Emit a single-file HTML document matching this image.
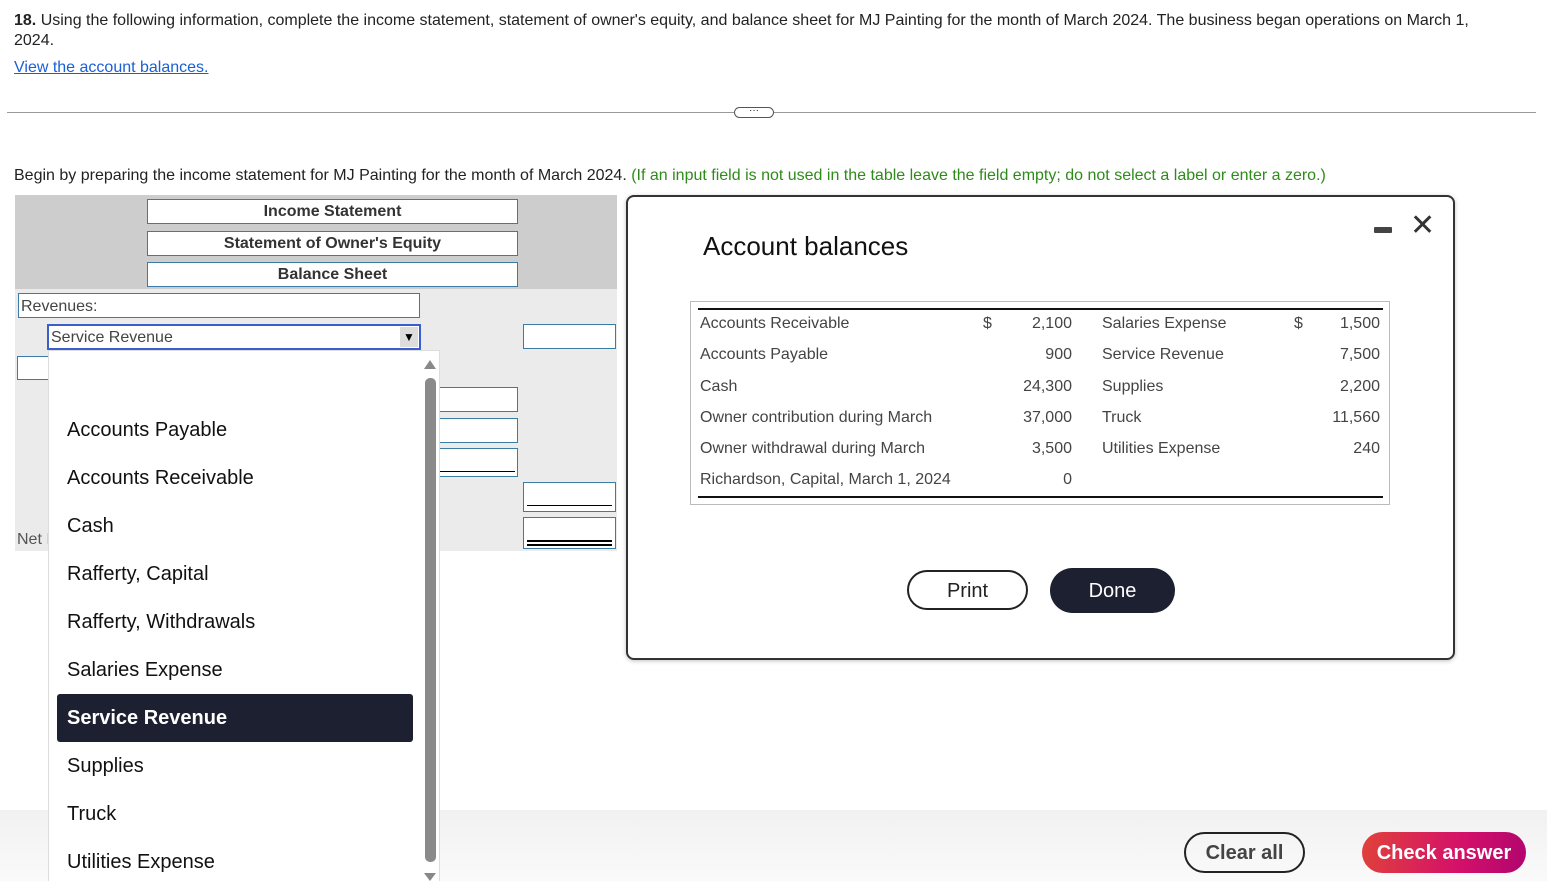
<!DOCTYPE html>
<html><head><style>
*{box-sizing:border-box}
body{margin:0;width:1547px;height:881px;overflow:hidden;background:#fff;font-family:"Liberation Sans",Arial,sans-serif;position:relative;color:#222}
.a{position:absolute}
.box{position:absolute;background:#fff;border:1px solid #3a7ca5}
.hb{position:absolute;left:147px;width:371px;height:25px;background:#fff;border:1px solid #3a7ca5;text-align:center;font-weight:bold;font-size:16px;line-height:24px;color:#333}
.it{position:absolute;left:67px;font-size:20px;color:#111}
.tr{position:absolute;font-size:16px;color:#444}
</style></head><body>
<div class="a" style="left:14px;top:11px;width:1480px;font-size:16px;line-height:20px;color:#222"><b>18.</b> Using the following information, complete the income statement, statement of owner's equity, and balance sheet for MJ Painting for the month of March 2024. The business began operations on March 1, 2024.</div>
<div class="a" style="left:14px;top:59px;font-size:16px;color:#1a5fd6;text-decoration:underline">View the account balances.</div>
<div class="a" style="left:7px;top:112px;width:1529px;height:1px;background:#999"></div>
<div class="a" style="left:734px;top:107px;width:40px;height:11px;border:1px solid #555;border-radius:6px;background:#fff;font-size:10px;line-height:6px;text-align:center">···</div>
<div class="a" style="left:14px;top:167px;font-size:16px;color:#222">Begin by preparing the income statement for MJ Painting for the month of March 2024. <span style="color:#2e8b1a">(If an input field is not used in the table leave the field empty; do not select a label or enter a zero.)</span></div>

<div class="a" style="left:15px;top:195px;width:602px;height:94px;background:#cdcdcd"></div>
<div class="a" style="left:15px;top:289px;width:602px;height:262px;background:#ebebeb"></div>
<div class="hb" style="top:199px">Income Statement</div>
<div class="hb" style="top:231px">Statement of Owner's Equity</div>
<div class="hb" style="top:262px">Balance Sheet</div>
<div class="box" style="left:18px;top:293px;width:402px;height:25px;font-size:16px;line-height:25px;padding-left:2px;color:#444">Revenues:</div>
<div class="box" style="left:47px;top:324px;width:374px;height:26px;border:2px solid #3a5fcd;font-size:16px;line-height:24px;padding-left:2px;color:#444">Service Revenue<div class="a" style="right:1px;top:1px;width:18px;height:20px;background:#ddd;font-size:12px;text-align:center;line-height:20px;color:#000">▼</div></div>
<div class="box" style="left:523px;top:324px;width:93px;height:25px"></div>
<div class="box" style="left:17px;top:356px;width:40px;height:24px"></div>
<div class="box" style="left:430px;top:387px;width:88px;height:25px"></div>
<div class="box" style="left:430px;top:418px;width:88px;height:25px"></div>
<div class="box" style="left:430px;top:448px;width:88px;height:29px"><div class="a" style="left:8px;right:2px;top:22px;height:1px;background:#000"></div></div>
<div class="box" style="left:523px;top:482px;width:93px;height:30px"><div class="a" style="left:3px;right:3px;top:22px;height:1px;background:#000"></div></div>
<div class="box" style="left:523px;top:517px;width:93px;height:32px"><div class="a" style="left:3px;right:3px;top:22px;height:2px;background:#000"></div><div class="a" style="left:3px;right:3px;top:26px;height:2px;background:#000"></div></div>
<div class="a" style="left:17px;top:531px;font-size:16px;color:#555">Net I</div>
<div class="a" style="left:0;top:810px;width:1547px;height:71px;background:linear-gradient(#f1f1f1,#fafafa)"></div>

<div class="a" style="left:48px;top:350px;width:392px;height:531px;background:#fff;border:1px solid #ddd;border-bottom:none"></div>
<div class="a" style="left:424px;top:360px;width:0;height:0;border-left:6px solid transparent;border-right:6px solid transparent;border-bottom:9px solid #888"></div>
<div class="a" style="left:425px;top:378px;width:11px;height:484px;background:#8a8a8a;border-radius:5px"></div>
<div class="a" style="left:424px;top:873px;width:0;height:0;border-left:6px solid transparent;border-right:6px solid transparent;border-top:8px solid #888"></div>
<div class="it" style="top:419px">Accounts Payable</div>
<div class="it" style="top:467px">Accounts Receivable</div>
<div class="it" style="top:515px">Cash</div>
<div class="it" style="top:563px">Rafferty, Capital</div>
<div class="it" style="top:611px">Rafferty, Withdrawals</div>
<div class="it" style="top:659px">Salaries Expense</div>
<div class="a" style="left:57px;top:694px;width:356px;height:48px;background:#1d2030;border-radius:3px"></div>
<div class="it" style="top:707px;color:#fff;font-weight:bold">Service Revenue</div>
<div class="it" style="top:755px">Supplies</div>
<div class="it" style="top:803px">Truck</div>
<div class="it" style="top:851px">Utilities Expense</div>

<div class="a" style="left:626px;top:195px;width:829px;height:465px;border:2px solid #333;border-radius:8px;background:#fff;box-shadow:0 1px 4px rgba(0,0,0,.25)"></div>
<div class="a" style="left:703px;top:231px;font-size:26px;color:#111">Account balances</div>
<div class="a" style="left:1374px;top:227px;width:18px;height:6px;background:#444;border-radius:1px"></div>
<div class="a" style="left:1410px;top:209px;font-size:30px;color:#333;line-height:34px">✕</div>
<div class="a" style="left:690px;top:301px;width:700px;height:204px;border:1px solid #bbb"></div>
<div class="a" style="left:698px;top:308px;width:685px;height:2px;background:#111"></div>
<div class="a" style="left:698px;top:496px;width:685px;height:2px;background:#111"></div>
<div class="tr" style="left:700px;top:315px">Accounts Receivable</div>
<div class="tr" style="left:700px;top:346px">Accounts Payable</div>
<div class="tr" style="left:700px;top:378px">Cash</div>
<div class="tr" style="left:700px;top:409px">Owner contribution during March</div>
<div class="tr" style="left:700px;top:440px">Owner withdrawal during March</div>
<div class="tr" style="left:700px;top:471px">Richardson, Capital, March 1, 2024</div>
<div class="tr" style="left:983px;top:315px">$</div>
<div class="tr" style="left:1294px;top:315px">$</div>
<div class="tr" style="left:972px;top:315px;width:100px;text-align:right">2,100</div>
<div class="tr" style="left:972px;top:346px;width:100px;text-align:right">900</div>
<div class="tr" style="left:972px;top:378px;width:100px;text-align:right">24,300</div>
<div class="tr" style="left:972px;top:409px;width:100px;text-align:right">37,000</div>
<div class="tr" style="left:972px;top:440px;width:100px;text-align:right">3,500</div>
<div class="tr" style="left:972px;top:471px;width:100px;text-align:right">0</div>
<div class="tr" style="left:1102px;top:315px">Salaries Expense</div>
<div class="tr" style="left:1102px;top:346px">Service Revenue</div>
<div class="tr" style="left:1102px;top:378px">Supplies</div>
<div class="tr" style="left:1102px;top:409px">Truck</div>
<div class="tr" style="left:1102px;top:440px">Utilities Expense</div>
<div class="tr" style="left:1280px;top:315px;width:100px;text-align:right">1,500</div>
<div class="tr" style="left:1280px;top:346px;width:100px;text-align:right">7,500</div>
<div class="tr" style="left:1280px;top:378px;width:100px;text-align:right">2,200</div>
<div class="tr" style="left:1280px;top:409px;width:100px;text-align:right">11,560</div>
<div class="tr" style="left:1280px;top:440px;width:100px;text-align:right">240</div>
<div class="a" style="left:907px;top:570px;width:121px;height:40px;border:2px solid #222;border-radius:20px;text-align:center;line-height:38px;font-size:20px;color:#222">Print</div>
<div class="a" style="left:1050px;top:568px;width:125px;height:45px;background:#1d2030;border-radius:23px;text-align:center;line-height:46px;font-size:20px;color:#fff">Done</div>

<div class="a" style="left:1184px;top:832px;width:121px;height:41px;border:2px solid #222;border-radius:21px;text-align:center;line-height:39px;font-size:20px;font-weight:bold;color:#444">Clear all</div>
<div class="a" style="left:1362px;top:832px;width:164px;height:41px;background:linear-gradient(100deg,#e0423a,#d4106a 60%,#b0056e);border-radius:21px;text-align:center;line-height:42px;font-size:20px;font-weight:bold;color:#fff">Check answer</div>
</body></html>
